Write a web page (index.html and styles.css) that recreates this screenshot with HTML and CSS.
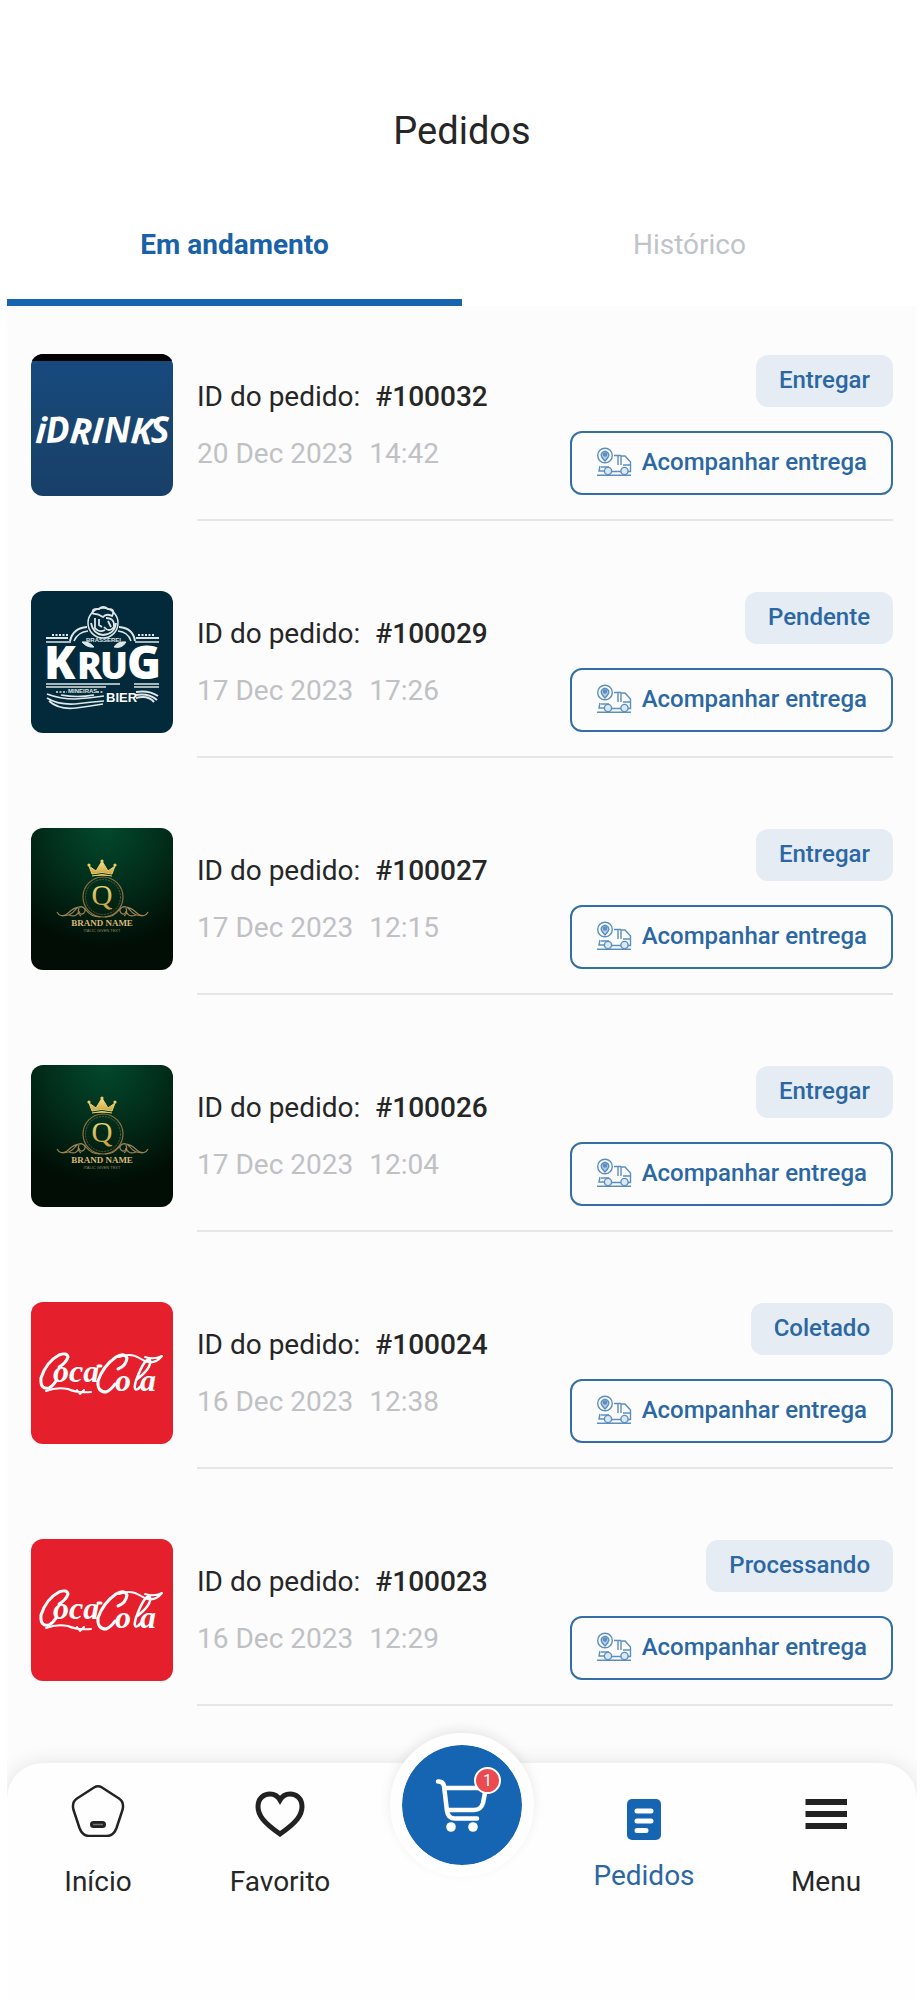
FILE: index.html
```html
<!DOCTYPE html>
<html lang="pt-BR">
<head>
<meta charset="utf-8">
<meta name="viewport" content="width=device-width, initial-scale=1">
<title>Pedidos</title>
<link rel="stylesheet" href="styles.css">
</head>
<body>
<svg class="defs" aria-hidden="true">
  <defs>
    <linearGradient id="g-idrinks" x1="0" y1="0" x2="0" y2="1"><stop offset="0" stop-color="#174a80"/><stop offset=".45" stop-color="#184672"/><stop offset="1" stop-color="#183f68"/></linearGradient>
    <radialGradient id="g-brand" cx=".52" cy="0" r=".85"><stop offset="0" stop-color="#02492d"/><stop offset=".45" stop-color="#02301d"/><stop offset="1" stop-color="#010d05"/></radialGradient>
    <linearGradient id="g-gold" x1="0" y1="0" x2="0" y2="1"><stop offset="0" stop-color="#f5e58a"/><stop offset="1" stop-color="#c59a3a"/></linearGradient>
    <symbol id="logo-idrinks" viewBox="0 0 142 142">
      <rect width="142" height="142" fill="url(#g-idrinks)"/>
      <rect width="142" height="7" fill="#000"/>
      <text class="idrinks-text" y="89" x="4 15 38 60 73 99 120" rotate="3 -3 5 3 -2 4 -3">iDRINKS</text>
    </symbol>
    <symbol id="logo-krug" viewBox="0 0 142 142">
      <rect width="142" height="142" fill="#032a3a"/>
      <g fill="none" stroke="#dfe6e8">
        <path d="M15 47H37M105 47H128" stroke-width="2"/>
        <path d="M15 51H40M104 51H128" stroke-width="1.5"/>
        <path d="M21 44H37M107 44H123" stroke-width="2" stroke-dasharray="2 1.5"/>
        <path d="M39 50Q42 37 56 36M104 50Q102 37 88 36" stroke-width="2"/>
        <path d="M43 50Q47 41 57 40M100 50Q97 41 87 40" stroke-width="1.5"/>
        <circle cx="72" cy="32" r="15" stroke-width="1.5"/>
        <path d="M62 23Q60 17 68 18Q72 14 77 18Q85 18 81 25Q75 22 72 26Q66 22 62 23M64 27V37Q68 42 74 39M68 28V34L71 36M75 27Q84 27 83 36Q78 42 73 36M77 30L80 36M60 32Q62 43 72 44Q84 43 85 32" stroke-width="1.8"/>
        <path d="M51 51Q56 57 63 56Q58 50 51 51ZM95 51Q91 58 83 56Q87 50 95 51Z" fill="#dfe6e8" stroke-width="1"/>
        <path d="M15 93H89M103 93H128M15 96H75M103 96H128" stroke-width="1.3"/>
        <path d="M25 101H36M66 101H73" stroke-width="1.5" stroke-dasharray="2 1.5"/>
        <path d="M16 103Q29 108 44 108Q60 107 73 105M16 107Q27 114 44 113Q60 111 73 110M18 110Q28 119 45 117Q60 115 72 113M30 104Q46 107 63 104" stroke-width="1.7"/>
        <path d="M105 101Q118 99 127 105M105 104Q118 102 126 109M105 107Q117 104 123 111" stroke-width="2"/>
      </g>
      <text class="krug-small" x="55" y="51">BRASSEREI</text>
      <text class="krug-small" x="37" y="102">MINEIRAS</text>
      <text class="krug-text" y="88"><tspan class="krug-cap" x="13">K</tspan><tspan x="46">R</tspan><tspan x="69">U</tspan><tspan class="krug-cap" x="96">G</tspan></text>
      <text class="krug-bier" x="75" y="111">BIER</text>
    </symbol>
    <symbol id="logo-brand" viewBox="0 0 142 142">
      <rect width="142" height="142" fill="url(#g-brand)"/>
      <path d="M61 46L58 38 65 43 71 33 77 43 84 38 81 46Q71 43 61 46ZM61 48Q71 45 81 48" fill="url(#g-gold)" stroke="#e8ce68" stroke-width="1"/>
      <g fill="#e8ce68"><circle cx="58" cy="37" r="1.6"/><circle cx="71" cy="33" r="1.6"/><circle cx="84" cy="37" r="1.6"/></g>
      <circle cx="72" cy="69" r="20" fill="none" stroke="#8b7440" stroke-width="1.2"/>
      <circle cx="72" cy="69" r="17.500" fill="none" stroke="#6f6239" stroke-width=".8" stroke-dasharray="2 1"/>
      <text class="brand-q" x="71" y="77">Q</text>
      <g fill="none" stroke="#9b8155" stroke-width="1.2">
        <path d="M26 84Q29 90 36 86Q44 78 51 79Q56 81 53 85Q49 88 48 83M31 88Q40 88 44 82Q50 75 55 82Q60 89 69 89M38 87Q46 90 48 83M50 88Q46 86 48 80"/>
        <path d="M117 84Q114 90 107 86Q99 78 92 79Q87 81 90 85Q94 88 95 83M112 88Q103 88 99 82Q93 75 88 82Q83 89 74 89M105 87Q97 90 95 83M93 88Q97 86 95 80"/>
      </g>
      <text class="brand-name" x="71" y="98">BRAND NAME</text>
      <text class="brand-tag" x="71" y="104">ITALIC GIVEN TEXT</text>
    </symbol>
    <symbol id="logo-cola" viewBox="0 0 142 142">
      <rect width="142" height="142" fill="#e61f2c"/>
      <g fill="none" stroke="#fff" stroke-linecap="round" stroke-linejoin="round">
        <path d="M28 65Q35 61 37 55Q36 50 28 53Q15 60 10 76Q9 88 18 86Q22 84 25 79" stroke-width="3"/>
        <path d="M87 67Q95 64 96 56Q93 50 85 55Q72 64 67 79Q66 90 75 90Q80 88 84 82" stroke-width="3"/>
        <path d="M15 89Q25 85 37 87Q45 91 60 90M46 88L49 92 53 88" stroke-width="2"/>
        <path d="M88 55Q100 50 110 57Q122 65 131 54Q123 58 114 55" stroke-width="2"/>
        <path d="M105 78Q121 66 119 58Q114 55 106 76Q101 90 107 87L111 83" stroke-width="2.500"/>
        <path d="M67 64H70" stroke-width="3"/>
      </g>
      <text class="cola-text" x="22" y="80">oca</text>
      <text class="cola-text" x="84" y="89">o</text>
      <text class="cola-text" x="109" y="89">a</text>
    </symbol>
    <symbol id="icon-truck" viewBox="0 0 36 30">
      <g fill="none" stroke="#5b8fc0" stroke-width="1.400">
        <circle cx="9" cy="8.500" r="7.300"/>
        <path d="M9 14Q4 9 5.500 6.500Q9 2 12.500 6.500Q14 9 9 14Z" fill="#b5cde4"/>
        <circle cx="9" cy="7.500" r="1.600" fill="#5b8fc0"/>
        <path d="M18 8.500H25M22 9V18M25 18V9H29L34.500 15V24.500H32M27 18H34M4 19L3 24H8M5 20H13M16 24.500H25M1 28.300H35"/>
        <circle cx="12" cy="24" r="3.600" fill="#dce8f3"/>
        <circle cx="28.500" cy="24" r="3.600" fill="#dce8f3"/>
      </g>
    </symbol>
  </defs>
</svg>

<div class="screen">
  <header class="header"><h1 class="title">Pedidos</h1></header>
  <div class="tabs" role="tablist">
    <button class="tab tab-active" role="tab" aria-selected="true">Em andamento</button>
    <button class="tab" role="tab" aria-selected="false">Histórico</button>
  </div>

  <main class="orders">
    <article class="order">
      <svg class="thumb" role="img" aria-label="iDrinks"><use href="#logo-idrinks"/></svg>
      <div class="order-body">
        <div class="info"><p class="order-id">ID do pedido:<strong class="number">#100032</strong></p><p class="date"><span>20 Dec 2023</span><span>14:42</span></p></div>
        <div class="actions"><span class="badge">Entregar</span><button class="track"><svg class="truck" aria-hidden="true"><use href="#icon-truck"/></svg>Acompanhar entrega</button></div>
      </div>
    </article>
    <article class="order">
      <svg class="thumb" role="img" aria-label="Krug Bier"><use href="#logo-krug"/></svg>
      <div class="order-body">
        <div class="info"><p class="order-id">ID do pedido:<strong class="number">#100029</strong></p><p class="date"><span>17 Dec 2023</span><span>17:26</span></p></div>
        <div class="actions"><span class="badge">Pendente</span><button class="track"><svg class="truck" aria-hidden="true"><use href="#icon-truck"/></svg>Acompanhar entrega</button></div>
      </div>
    </article>
    <article class="order">
      <svg class="thumb" role="img" aria-label="Brand Name"><use href="#logo-brand"/></svg>
      <div class="order-body">
        <div class="info"><p class="order-id">ID do pedido:<strong class="number">#100027</strong></p><p class="date"><span>17 Dec 2023</span><span>12:15</span></p></div>
        <div class="actions"><span class="badge">Entregar</span><button class="track"><svg class="truck" aria-hidden="true"><use href="#icon-truck"/></svg>Acompanhar entrega</button></div>
      </div>
    </article>
    <article class="order">
      <svg class="thumb" role="img" aria-label="Brand Name"><use href="#logo-brand"/></svg>
      <div class="order-body">
        <div class="info"><p class="order-id">ID do pedido:<strong class="number">#100026</strong></p><p class="date"><span>17 Dec 2023</span><span>12:04</span></p></div>
        <div class="actions"><span class="badge">Entregar</span><button class="track"><svg class="truck" aria-hidden="true"><use href="#icon-truck"/></svg>Acompanhar entrega</button></div>
      </div>
    </article>
    <article class="order">
      <svg class="thumb" role="img" aria-label="Coca-Cola"><use href="#logo-cola"/></svg>
      <div class="order-body">
        <div class="info"><p class="order-id">ID do pedido:<strong class="number">#100024</strong></p><p class="date"><span>16 Dec 2023</span><span>12:38</span></p></div>
        <div class="actions"><span class="badge">Coletado</span><button class="track"><svg class="truck" aria-hidden="true"><use href="#icon-truck"/></svg>Acompanhar entrega</button></div>
      </div>
    </article>
    <article class="order">
      <svg class="thumb" role="img" aria-label="Coca-Cola"><use href="#logo-cola"/></svg>
      <div class="order-body">
        <div class="info"><p class="order-id">ID do pedido:<strong class="number">#100023</strong></p><p class="date"><span>16 Dec 2023</span><span>12:29</span></p></div>
        <div class="actions"><span class="badge">Processando</span><button class="track"><svg class="truck" aria-hidden="true"><use href="#icon-truck"/></svg>Acompanhar entrega</button></div>
      </div>
    </article>
  </main>

  <nav class="nav">
    <a class="nav-item" href="#inicio">
      <svg class="nav-icon" viewBox="0 0 54 54" aria-hidden="true"><path d="M23 4.500Q27 2 31 4.500L48 15.500Q53.500 19 51.500 27L45.500 45Q42.500 53 36 53H18Q11.500 53 8.500 45L2.500 27Q.5 19 6 15.500Z" fill="none" stroke="#222" stroke-width="2.500"/><rect x="19" y="38" width="16" height="7" rx="3.500" fill="#222"/><path d="M22 41.500H32" stroke="#777" stroke-width="1.500"/></svg>
      <span>Início</span>
    </a>
    <a class="nav-item" href="#favorito">
      <svg class="nav-icon" viewBox="0 0 54 54" aria-hidden="true"><path d="M27 51C10 39 5 32 5 23.500C5 15 11 11 17 11C22 11 25 13.500 27 17C29 13.500 32 11 37 11C43 11 49 15 49 23.500C49 32 44 39 27 51Z" fill="none" stroke="#222" stroke-width="5"/></svg>
      <span>Favorito</span>
    </a>
    <a class="cart" href="#carrinho" aria-label="Carrinho">
      <svg class="cart-icon" viewBox="0 0 120 120" aria-hidden="true"><g fill="none" stroke="#fff" stroke-width="4.500" stroke-linecap="round" stroke-linejoin="round"><path d="M36 36.500Q41 36 42 41L45 66Q46 73.500 53 73.500H75"/><path d="M43 43H84L81 58Q79 65 72 65H45"/></g><circle cx="49" cy="82" r="4.800" fill="#fff"/><circle cx="71" cy="82" r="4.800" fill="#fff"/></svg>
      <span class="count">1</span>
    </a>
    <a class="nav-item nav-current" href="#pedidos" aria-current="page">
      <svg class="doc-icon" viewBox="0 0 36 42" aria-hidden="true"><rect x="1" width="34" height="41" rx="5" fill="#1665b3"/><path d="M11 12H25M11 22H25M11 31.500H20" stroke="#fff" stroke-width="5" stroke-linecap="round"/></svg>
      <span>Pedidos</span>
    </a>
    <a class="nav-item" href="#menu">
      <svg class="nav-icon" viewBox="0 0 54 54" aria-hidden="true"><path d="M6.500 19H48M6.500 31H48M6.500 43H48" stroke="#222" stroke-width="6"/></svg>
      <span>Menu</span>
    </a>
  </nav>
</div>
</body>
</html>
```
FILE: styles.css
```css
* { box-sizing: border-box; }

body {
  margin: 0;
  background: #fff;
  color: #262626;
  font-family: Roboto, "Liberation Sans", sans-serif;
  font-size: 28px;
  line-height: 34px;
}

h1, p { margin: 0; }
a { color: inherit; text-decoration: none; }
button { font-family: inherit; cursor: pointer; }
.defs { display: block; width: 0; height: 0; }

.screen {
  display: flex;
  flex-direction: column;
  min-height: 100vh;
  margin: 0 7px;
  overflow: hidden;
}

.header { padding: 109px 0 39px; text-align: center; }
.title { font-size: 38px; font-weight: 400; line-height: 44px; }

.tabs { display: grid; grid-template-columns: 1fr 1fr; }
.tab {
  height: 114px;
  padding: 0 0 2px;
  border: 0;
  border-bottom: 7px solid transparent;
  background: none;
  color: #c0c3c8;
  font-size: 28px;
  line-height: 34px;
}
.tab-active { border-color: #1665ae; color: #1a62a8; font-weight: 700; }

.orders {
  display: flex;
  flex-direction: column;
  gap: 70px;
  padding: 48px 24px 97px;
  background: #fcfcfc;
}

.order { display: flex; align-items: flex-start; gap: 24px; }
.thumb { flex: none; width: 142px; height: 142px; border-radius: 12px; }

.order-body {
  display: flex;
  flex: 1;
  justify-content: space-between;
  height: 167px;
  border-bottom: 2px solid #e6e6e6;
}
.info { display: flex; flex-direction: column; gap: 23px; padding-top: 26px; white-space: nowrap; }
.number { margin-left: 15px; font-weight: 500; }
.date { display: flex; gap: 16px; color: #bfc1c4; }

.actions { display: flex; flex-direction: column; align-items: flex-end; gap: 24px; padding-top: 1px; }
.badge {
  padding: 8px 23px 10px;
  border-radius: 12px;
  background: #e5ecf4;
  color: #2b67a3;
  font-size: 24px;
  font-weight: 500;
}
.track {
  display: flex;
  align-items: center;
  gap: 10px;
  height: 64px;
  padding: 0 24px 2px;
  border: 2px solid #336fa6;
  border-radius: 12px;
  background: transparent;
  color: #2b67a3;
  font-size: 24px;
  font-weight: 500;
  white-space: nowrap;
}
.truck { width: 36px; height: 30px; }

.nav {
  display: grid;
  grid-template-columns: repeat(5, 1fr);
  flex: 1;
  margin-top: -40px;
  border-radius: 36px 36px 0 0;
  background: #fefefe;
  box-shadow: 0 0 20px rgba(0, 0, 0, .1);
}
.nav-item {
  display: flex;
  flex-direction: column;
  align-items: center;
  gap: 28px;
  padding-top: 20px;
}
.nav-current { gap: 18px; padding-top: 36px; color: #2b67a3; }
.nav-icon { width: 54px; height: 54px; }
.doc-icon { width: 36px; height: 42px; }

.cart {
  position: relative;
  justify-self: center;
  width: 144px;
  height: 144px;
  margin-top: -30px;
  border: 12px solid #fefefe;
  border-radius: 50%;
  background: #1665b3;
  background-clip: padding-box;
  box-shadow: 0 -4px 12px rgba(0, 0, 0, .08);
}
.cart-icon { display: block; width: 100%; height: 100%; }
.count {
  position: absolute;
  top: 22px;
  right: 21px;
  width: 27px;
  height: 27px;
  border: 2px solid #fff;
  border-radius: 50%;
  background: #e94b50;
  color: #fff;
  font-size: 16px;
  line-height: 23px;
  text-align: center;
}

.idrinks-text { fill: #fff; font: italic 700 36px "Open Sans", sans-serif; }
.krug-text { fill: #fff; font: 800 37px "Open Sans", sans-serif; }
.krug-cap { font-size: 46px; }
.krug-small { fill: #dfe6e8; font: 700 6px "Liberation Sans", sans-serif; }
.krug-bier { fill: #fff; font: 700 13px "Liberation Sans Narrow", "Liberation Sans", sans-serif; }
.brand-q { fill: url(#g-gold); font: 29px "Liberation Serif", serif; text-anchor: middle; }
.brand-name { fill: #d9b777; font: 700 9px "Liberation Serif", serif; text-anchor: middle; }
.brand-tag { fill: #8c8560; font: 4px "Liberation Sans", sans-serif; text-anchor: middle; }
.cola-text { fill: #fff; font: italic 700 32px "Liberation Serif", serif; }
```
